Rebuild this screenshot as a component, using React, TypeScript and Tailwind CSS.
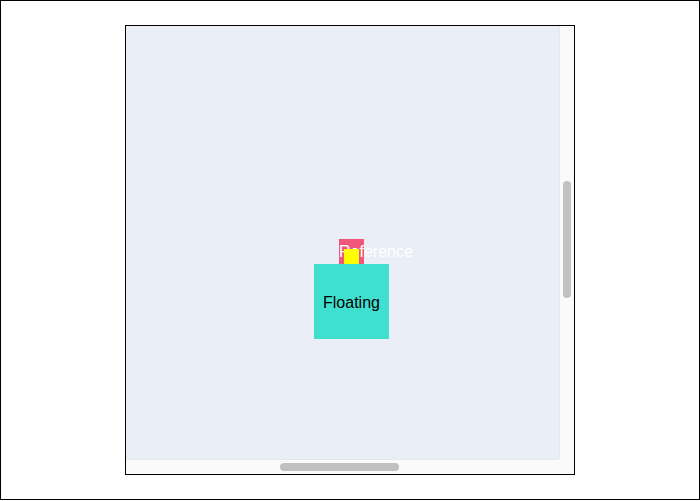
import { useLayoutEffect, useRef } from "react";

export default function App() {
  const viewport = useRef<HTMLDivElement>(null);

  useLayoutEffect(() => {
    const el = viewport.current;
    if (!el) return;
    el.scrollLeft = 575;
    el.scrollTop = 575;
  }, []);

  return (
    <div className="w-[700px] h-[500px] border border-black bg-white flex items-center justify-center font-['Liberation_Sans',Arial,sans-serif]">
      <div className="w-[450px] h-[450px] border border-black grid grid-cols-[433px_15px] grid-rows-[433px_15px]">
        <div ref={viewport} className="overflow-hidden">
          <div className="w-[1600px] h-[1600px] bg-[#eaeef6] pl-[788px] pt-[788px]">
            <div className="relative w-[25px]">
              <div className="w-[25px] h-[25px] bg-[#f0577a] text-white text-base leading-[25px] whitespace-nowrap">
                Reference
              </div>
              <div className="absolute top-full left-[-25px] w-[75px] h-[75px] bg-[#40e0d0] flex items-center justify-center text-black text-base pt-[2px]">
                <div className="absolute -top-[15px] left-[30px] w-[15px] h-[15px] bg-[#ffff00]" />
                Floating
              </div>
            </div>
          </div>
        </div>

        {/* vertical scrollbar */}
        <div className="bg-[#fafafa] border-l border-[#e8e8e8] pt-[155px] flex justify-center">
          <div className="w-[8px] h-[117px] rounded-full bg-[#c1c1c1]" />
        </div>

        {/* horizontal scrollbar */}
        <div className="bg-[#fafafa] border-t border-[#e8e8e8] pl-[154px] pt-[3px]">
          <div className="w-[119px] h-[8px] rounded-full bg-[#c1c1c1]" />
        </div>
        <div className="bg-[#fafafa]" />
      </div>
    </div>
  );
}
